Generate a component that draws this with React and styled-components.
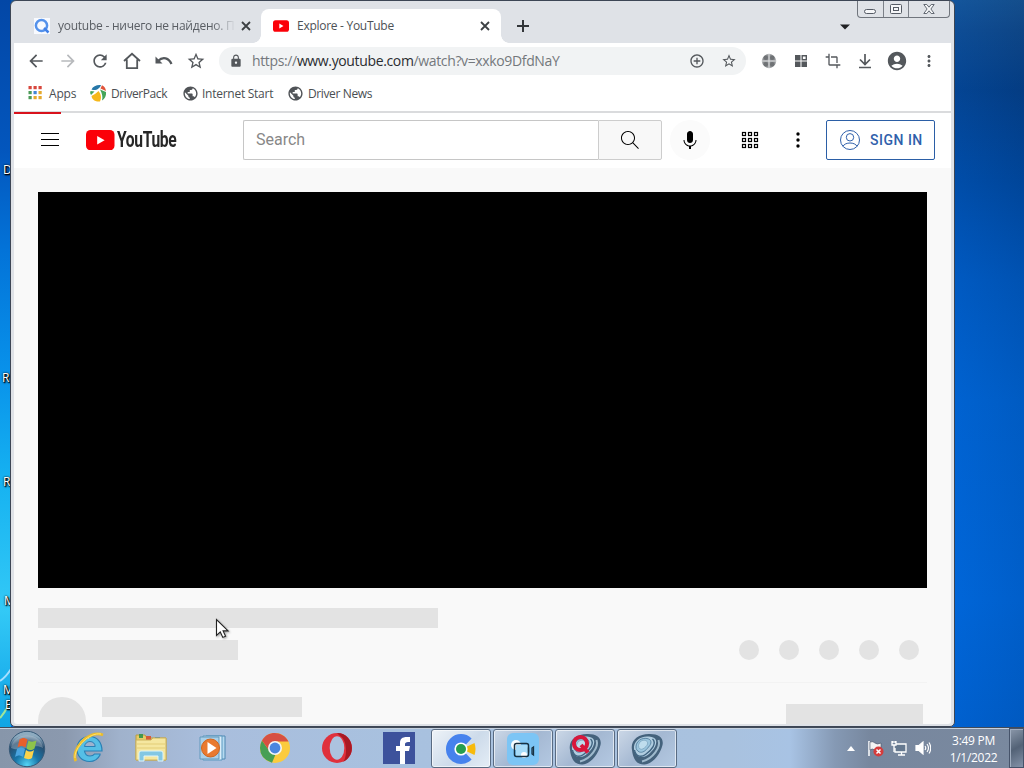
import React from "react";
import styled, { createGlobalStyle } from "styled-components";
import { MdArrowBack, MdArrowForward, MdRefresh, MdStarBorder, MdLock, MdCrop, MdAccountCircle, MdMoreVert, MdPublic, MdAddCircleOutline } from "react-icons/md";

const Global = createGlobalStyle`
  *{box-sizing:border-box}
  html,body{margin:0;overflow:hidden}
  svg{display:block;flex:none}
`;

const Desktop = styled.div`
  position: relative;
  width: 1024px;
  height: 768px;
  display: flex;
  flex-direction: column;
  overflow: hidden;
  font-family: "Open Sans", "Noto Sans", sans-serif;
  background:
    linear-gradient(180deg, #0347a6 0, #0356bd 150px, #0373d8 250px, #0891ea 370px, #16b2f1 480px, #33c9f6 610px, #20b4ee 670px, #10a5e4 727px) 0 0 / 11px 727px no-repeat,
    linear-gradient(90deg, rgba(0, 100, 220, 0.15) 954px, rgba(0, 40, 100, 0.12) 1024px),
    linear-gradient(180deg, #175391 0, #10498a 30px, #043f87 90px, #0049a0 180px, #0058bd 280px, #0062cf 400px, #0066d8 600px, #0060cd 727px);
`;
const DesktopLabel = styled.span`
  position: absolute;
  left: ${(p) => p.$x}px;
  top: ${(p) => p.$y}px;
  color: #fff;
  font-size: 12px;
  line-height: 16px;
  text-shadow: 1px 1px 2px #000, 0 0 2px #000, 1px 1px 1px #000;
`;
const Streaks = styled.svg`
  position: absolute;
  left: 0;
  top: 660px;
`;
const Window = styled.main`
  position: relative;
  width: 945px;
  height: 727px;
  margin-left: 10px;
  border: 1px solid #3d4655;
  border-radius: 6px 6px 5px 5px;
  background: #dfe2e7;
  padding: 0 3px 2px;
  display: flex;
  flex-direction: column;
  overflow: hidden;
`;
const TabStrip = styled.div`
  height: 42px;
  display: flex;
  align-items: flex-end;
  flex: none;
`;
const Tab = styled.div`
  position: relative;
  width: ${(p) => p.$width}px;
  height: 34px;
  padding: 0 ${(p) => p.$end}px 0 ${(p) => p.$pad}px;
  border-radius: 8px 8px 0 0;
  background: ${(p) => (p.$active ? "#fff" : "transparent")};
  display: flex;
  align-items: center;
  color: #3c4043;
  &::before, &::after {
    content: "";
    display: ${(p) => (p.$active ? "block" : "none")};
    position: absolute;
    bottom: 0;
    width: 8px;
    height: 8px;
  }
  &::before { left: -8px; background: radial-gradient(circle at 0 0, transparent 7.5px, #fff 8px); }
  &::after { right: -8px; background: radial-gradient(circle at 100% 0, transparent 7.5px, #fff 8px); }
`;
const TabTitle = styled.span`
  flex: 1;
  margin: -1px 0 0 8px;
  font-size: 12px;
  letter-spacing: ${(p) => p.$track}px;
  color: ${(p) => p.$color};
  white-space: nowrap;
  mask-image: ${(p) => (p.$fade ? "linear-gradient(90deg,#000 154px,transparent 178px)" : "none")};
`;
const NewTab = styled.div`
  width: 43px;
  height: 34px;
  display: flex;
  align-items: center;
  justify-content: center;
`;
const TabMenu = styled.svg`
  margin: 0 101px 13px auto;
`;
const Caption = styled.div`
  position: absolute;
  right: 4px;
  top: -1px;
  width: 93px;
  height: 18px;
  display: flex;
  border: 1px solid #70757d;
  border-top: 0;
  border-radius: 0 0 4px 4px;
  color: #555b65;
`;
const CaptionButton = styled.div`
  width: ${(p) => p.$w}px;
  display: flex;
  align-items: center;
  justify-content: center;
  & + & { border-left: 1px solid #7c8189; }
`;
const Toolbar = styled.div`
  height: 37px;
  flex: none;
  background: #fff;
  display: flex;
  align-items: center;
  padding: 0 0 1px 6px;
  color: #54585c;
`;
const ToolButton = styled.div`
  width: 32px;
  height: 32px;
  flex: none;
  display: flex;
  align-items: center;
  justify-content: center;
  color: ${(p) => (p.$dim ? "#b8babd" : "inherit")};
`;
const Omnibox = styled.div`
  width: 527px;
  height: 28px;
  margin: 0 7px;
  padding: 0 1px 0 10px;
  border-radius: 14px;
  background: #f1f3f4;
  display: flex;
  align-items: center;
`;
const Url = styled.span`
  flex: 1;
  margin: -1px 0 0 9px;
  font-size: 14px;
  letter-spacing: -0.36px;
  color: #74787c;
  white-space: nowrap;
  b { font-weight: 400; color: #2b2d30; }
`;
const Bookmarks = styled.div`
  height: 31px;
  flex: none;
  background: #fff;
  display: flex;
  align-items: center;
  padding: 0 14px 5px;
`;
const Bookmark = styled.div`
  width: ${(p) => p.$w}px;
  display: flex;
  align-items: center;
  gap: ${(p) => p.$gap}px;
  font-size: 12px;
  letter-spacing: ${(p) => p.$track}px;
  color: #4a4e52;
  white-space: nowrap;
`;
const LoadingRail = styled.div`
  height: 3px;
  flex: none;
  padding-top: 1px;
  background: linear-gradient(#dadbdd 2px, #fff 2px);
`;
const Progress = styled.div`
  width: 47px;
  height: 2px;
  background: #d8121c;
`;
const Page = styled.div`
  flex: 1;
  min-height: 0;
  background: #f9f9f9;
  overflow: hidden;
  border-radius: 0 0 3px 3px;
`;
const Masthead = styled.header`
  height: 54px;
  padding: 0 16px 2px 24px;
  background: #fff;
  display: flex;
  align-items: center;
`;
const Logo = styled.div`
  width: 157px;
  margin-left: 24px;
  display: flex;
  align-items: center;
`;
const Wordmark = styled.span`
  margin-left: 2.5px;
  font: 700 22px/24px Roboto, sans-serif;
  letter-spacing: -0.5px;
  color: #272727;
  transform: scaleX(0.71);
  transform-origin: 0 50%;
`;
const SearchField = styled.div`
  width: 355px;
  height: 40px;
  padding: 0 0 2px 12px;
  border: 1px solid #c6c6c6;
  border-right: 0;
  border-radius: 2px 0 0 2px;
  display: flex;
  align-items: center;
  color: #888;
  font: 16px Roboto, sans-serif;
`;
const SearchButton = styled.div`
  width: 64px;
  height: 40px;
  border: 1px solid #cdcdcd;
  border-radius: 0 2px 2px 0;
  background: #f8f8f8;
  display: flex;
  align-items: center;
  justify-content: center;
`;
const MicButton = styled.div`
  width: 40px;
  height: 40px;
  margin: 0 28px 0 8px;
  border-radius: 50%;
  background: #fbfbfb;
  display: flex;
  align-items: center;
  justify-content: center;
`;
const MenuDots = styled.svg`
  margin: 0 16px 0 24px;
`;
const SignIn = styled.div`
  width: 109px;
  height: 40px;
  padding-left: 11px;
  border: 1px solid #2b5ea6;
  border-radius: 2px;
  display: flex;
  align-items: center;
  gap: 8px;
  color: #2f60ab;
  font: 500 14px Roboto, sans-serif;
  letter-spacing: 0.5px;
  white-space: nowrap;
`;
const Watch = styled.div`
  width: 889px;
  margin: 24px 0 0 24px;
`;
const Player = styled.div`
  height: 396px;
  background: #000;
`;
const Block = styled.div`
  width: ${(p) => p.$w}px;
  height: 20px;
  background: #e3e3e3;
`;
const TitleSkeleton = styled.div`
  height: 95px;
  padding-top: 20px;
  border-bottom: 1px solid #f3f3f3;
  display: flex;
  flex-direction: column;
  gap: 12px;
`;
const MetaSkeleton = styled.div`
  display: flex;
  justify-content: space-between;
  padding-right: 8px;
`;
const Dots = styled.div`
  display: flex;
  gap: 20px;
`;
const Dot = styled.div`
  width: 20px;
  height: 20px;
  border-radius: 50%;
  background: #e3e3e3;
`;
const OwnerSkeleton = styled.div`
  display: flex;
  padding: 14px 4px 0 0;
`;
const Avatar = styled.div`
  width: 48px;
  height: 48px;
  margin-right: 16px;
  border-radius: 50%;
  background: #e3e3e3;
`;
const Subscribe = styled.div`
  width: 137px;
  height: 36px;
  margin: 7px 0 0 auto;
  background: #e3e3e3;
`;
const Cursor = styled.svg`
  position: absolute;
  left: 215px;
  top: 618px;
  filter: drop-shadow(1px 1px 1px rgba(0, 0, 0, 0.35));
`;
const Taskbar = styled.footer`
  height: 41px;
  flex: none;
  display: flex;
  border-top: 1px solid #414b5a;
  box-shadow: inset 0 1px #c5d1df;
  background: linear-gradient(90deg, #8796aa 0, #8b99ae 65px, #a0b2cc 120px, #a9bedd 210px, #a8c1df 400px, #a9c2df 730px, #a8c3e4 790px, #8599b4 835px, #77879e 870px, #7a899f 1024px);
`;
const StartCell = styled.div`
  width: 58px;
  padding: 2px 0 0 8px;
`;
const Launcher = styled.div`
  width: 62px;
  height: 40px;
  display: flex;
  align-items: center;
  justify-content: center;
`;
const TaskButton = styled.div`
  width: 60px;
  height: 39px;
  margin: 1px 2px 0 0;
  border: 1px solid #596b82;
  border-radius: 3px;
  box-shadow: inset 0 0 0 1px rgba(255, 255, 255, 0.6);
  background: ${(p) => (p.$active ? "linear-gradient(135deg,#eef3f8,#cddbea 55%,#e4edf6)" : "linear-gradient(135deg,#ccd8e7,#a4b8d2 50%,#b4c9e2)")};
  display: flex;
  align-items: center;
  justify-content: center;
`;
const Running = styled.div`
  display: flex;
  margin-left: 1px;
`;
const Tray = styled.div`
  margin-left: auto;
  display: flex;
  align-items: center;
`;
const TrayIcon = styled.div`
  width: 24px;
  display: flex;
  justify-content: center;
`;
const Clock = styled.div`
  width: 74px;
  padding: 2px 0 0 3px;
  color: #fff;
  text-align: center;
  font-size: 12px;
  line-height: 17px;
  letter-spacing: -0.3px;
`;
const ShowDesktop = styled.div`
  width: 15px;
  height: 40px;
  border: 1px solid #46536a;
  box-shadow: inset 1px 1px #a0adbf;
  background: linear-gradient(150deg, #8b98aa, #536276 50%, #8492a8);
`;

const CloseIcon = () => (
  <svg width="14" height="14"><path d="M3 3l8 8m0-8l-8 8" stroke="#3c4043" strokeWidth="1.800" /></svg>
);

const YtBadge = ({ w, h }) => (
  <svg width={w} height={h} viewBox="0 0 28 20">
    <rect width="28" height="20" rx="4.5" fill="#fb0008" />
    <path d="M11 5.8v8.4l7.3-4.2z" fill="#fff" />
  </svg>
);

const AppsGrid = () => {
  const colors = ["#d8473d", "#d8473d", "#d8473d", "#4b9a57", "#4285d4", "#e5a92c", "#4b9a57", "#e5a92c", "#e5a92c"];
  return (
    <svg width="14" height="14">
      {colors.map((c, i) => (
        <rect key={i} x={0.5 + (i % 3) * 5} y={Math.floor(i / 3) * 5} width="3.2" height="3.2" fill={c} />
      ))}
    </svg>
  );
};

const DriverPackIcon = () => (
  <svg width="18" height="18" viewBox="0 0 18 18">
    <path d="M2.500 5.500C4 2 8 .5 12 1c-1 3-4 5.500-8 5z" fill="#2677a8" />
    <path d="M13 1.300c2.500 1 3.500 3 4 5.700L11.500 4.500z" fill="#e0543a" />
    <path d="M11 5.500l6 2.500c.4 4-1 6.500-4 8.500 1-4 0-7-2-11z" fill="#45a55a" />
    <path d="M1.500 7l4 .5L2 11q-1.500-2-.5-4z" fill="#45a55a" />
    <path d="M2.500 12c2-1 5-3 7-5 3 4 3 7 1.500 10.500-4 .5-8-1.500-8.500-5.500z" fill="#f6b81a" />
  </svg>
);

const Shell = ({ q }) => (
  <svg width="34" height="34" viewBox="0 0 34 34">
    <path d="M2 18C0 8 9 1.500 20 2c9 0 14 4 12.500 11-2 9-10 19-18 19.500C6 33 3 26 2 18z" fill="#44627c" />
    <path d="M28.500 8C31 15 23 27 12 29.500" fill="none" stroke="#9fbacd" strokeWidth="2" />
    <path d="M4 17C3 9 11 3.500 19 4.500c8 .5 9 5.500 5 12-4 5-8 9-12 8.500-5 0-7-3-8-8z" fill="#b0cde0" />
    <path d="M4.500 18c1 6 6 8 11 4.500C22 18 27 11 22.500 7" fill="none" stroke="#3f6380" strokeWidth="1.400" />
    <path d="M6 15c0-6 6-9.500 11-8.500s5 5 1.500 8.500c-3 4-6 6-9 5-2.500-1-3.500-3-3.500-5z" fill="#9cc6de" stroke="#5c86a4" />
    <path d="M8.500 13.500c.5-4 4-6 7-5s2.500 4 .5 6-4 3.500-6 2.500q-1.500-1-1.500-3.500z" fill="#bfdded" stroke="#7ca5bf" strokeWidth=".8" />
    {q && (
      <g fill="none" stroke="#d8173c" strokeWidth="4">
        <circle cx="12.500" cy="11.500" r="6.600" />
        <path d="M13 13l7 7.500" />
      </g>
    )}
  </svg>
);

const StartOrb = () => (
  <svg width="38" height="38" viewBox="0 0 38 38">
    <defs>
      <radialGradient id="orb" cx=".5" cy=".95" r=".85">
        <stop offset="0" stopColor="#55d5f5" />
        <stop offset=".4" stopColor="#1876a9" />
        <stop offset=".8" stopColor="#294d6e" />
        <stop offset="1" stopColor="#8dabc0" />
      </radialGradient>
    </defs>
    <circle cx="19" cy="19" r="17.700" fill="url(#orb)" stroke="#375a78" />
    <path d="M3 18C5 1 33 1 35 18c-9-6-22 5-32 0z" fill="#fff" opacity=".25" />
    <path d="M11.500 9.500c3-2 5-2 8 0l-2 8c-3-2-5-2-8 0z" fill="#e8602c" />
    <path d="M20.500 10.500c3 2 5 1 8 0l-2 8c-3 2-5 2-8 0z" fill="#8dc34b" />
    <path d="M9 19c3-2 5-2 8 0l-2 8c-3-2-5-2-8 0z" fill="#4aa4df" />
    <path d="M18 20c3 2 5 2 8 0l-2 8c-3 2-5 1-8 0z" fill="#fbd34b" />
  </svg>
);

const IeIcon = () => (
  <svg width="34" height="34" viewBox="0 0 34 34">
    <path d="M28 24C26 28 22 30.500 17.500 30.500 10 30.500 5 25 5 18S10 5.500 17.500 5.500C25 5.500 30 11 30 20H12.500c.5 3 2.500 5 5.500 5 2 0 3.500-.5 4.500-2H28z" fill="#55bfe6" stroke="#2a80b5" strokeWidth="1.200" />
    <path d="M12.500 15.500c.5-3 2.500-5 5.500-5s5 2 5.200 5z" fill="#9eb2ce" stroke="#2a80b5" />
    <path d="M8 13c2-4 5-6 9-6" fill="none" stroke="#b5e7f7" strokeWidth="1.500" />
    <path d="M4 30C-2 20 16-2 31 4" fill="none" stroke="#edbd29" strokeWidth="2.800" />
    <path d="M3 27C2 17 17 1 29 3" fill="none" stroke="#ffe270" strokeWidth="1" />
  </svg>
);

const FolderIcon = () => (
  <svg width="34" height="32" viewBox="0 0 34 32">
    <path d="M2 3h9l2 3h19v22H2z" fill="#e6cc67" stroke="#b99c47" />
    <path d="M5 2h4v4H5z" fill="#42974e" />
    <path d="M12 4h5v4h-5z" fill="#d55b3a" />
    <path d="M21 5h5v4h-5z" fill="#4886b5" />
    <path d="M2 8h15l2-2h13v22H2z" fill="#f5e7a0" stroke="#cdb35d" />
    <path d="M3 12h28M3 16h28" stroke="#e3cd77" />
    <path d="M5 29V21q0-2 2-2h20q2 0 2 2v8h-5v-5H10v5z" fill="#83c7e3" stroke="#dff5fa" />
  </svg>
);

const PlayerIcon = () => (
  <svg width="30" height="30" viewBox="0 0 30 30">
    <path d="M8 3h19v23H8z" fill="#b6daf0" stroke="#4e88b2" />
    <path d="M5 3h19v24H5z" fill="#dbeef9" stroke="#5b98c0" />
    <path d="M2 4h19v22H2z" fill="#aad0e9" stroke="#6299bd" />
    <circle cx="12.500" cy="15" r="9" fill="#e97a30" stroke="#d1651c" />
    <path d="M9.500 9v12l9-6z" fill="#fff" />
  </svg>
);

const ChromeIcon = () => (
  <svg width="30" height="30" viewBox="0 0 30 30">
    <circle cx="15" cy="15" r="15" fill="#fbcb3e" />
    <path d="M2 7.500L9.500 18l6 3.500L12 29.700Q0 26 0 15 0 11 2 7.500z" fill="#479f54" />
    <path d="M15 8.500h13.500C23-2 8-3 2 7.500L9.500 18z" fill="#d75042" />
    <circle cx="15" cy="15" r="7" fill="#f4f6f8" />
    <circle cx="15" cy="15" r="5.400" fill="#4b86df" />
  </svg>
);

const OperaIcon = () => (
  <svg width="30" height="30" viewBox="0 0 30 30">
    <circle cx="15" cy="15" r="15" fill="#e0303c" />
    <path d="M15 0c17 0 20 23 6 29 4-4 5-22-3-26z" fill="#a91923" />
    <ellipse cx="15" cy="15" rx="7.300" ry="11.800" fill="#acc3df" />
  </svg>
);

const FacebookIcon = () => (
  <svg width="32" height="32" viewBox="0 0 32 32">
    <path d="M0 0h32v32H0z" fill="#3d529c" />
    <path d="M17 32V19h-4v-5h4v-3c0-4 2-6 7-6h3v5h-2c-2 0-3 1-3 2v2h5l-1 5h-4v13z" fill="#fff" />
  </svg>
);

const BrowserIcon = () => (
  <svg width="30" height="30" viewBox="0 0 30 30">
    <path d="M25.600 4.400A15 15 0 1 0 25.600 25.600L19 18.500V11.500z" fill="#4682ed" />
    <path d="M20 13l8.500-4q2 6 0 12L20 17z" fill="#f7ba0b" />
    <circle cx="15" cy="15" r="6.600" fill="#fff" />
    <circle cx="15" cy="15" r="5" fill="#269e50" />
  </svg>
);

const CameraIcon = () => (
  <svg width="32" height="32" viewBox="0 0 32 32">
    <rect width="32" height="32" rx="6" fill="#7cc5f5" />
    <circle cx="9" cy="12" r="5" fill="#f6fcff" />
    <path d="M9 23V12h12v11z" fill="#a7dcf9" />
    <circle cx="17" cy="22" r="3" fill="#fff" />
    <rect x="7.500" y="10.500" width="14" height="13" rx="2" fill="none" stroke="#183141" strokeWidth="1.500" />
    <path d="M21.500 14.500v5M25 15l1.500-1v8L25 21z" fill="none" stroke="#183141" strokeWidth="1.300" />
  </svg>
);

export default function App() {
  return (
    <Desktop>
      <Global />
      <Streaks width="11" height="67">
        <path d="M0 21Q6 17 11 9" stroke="#a6dfff" strokeWidth="2" fill="none" />
        <path d="M0 58Q5 52 8 46" stroke="#9fe59b" strokeWidth="2" fill="none" />
      </Streaks>
      <DesktopLabel $x={3} $y={162}>D</DesktopLabel>
      <DesktopLabel $x={2} $y={370}>R</DesktopLabel>
      <DesktopLabel $x={3} $y={474}>R</DesktopLabel>
      <DesktopLabel $x={4} $y={593}>M</DesktopLabel>
      <DesktopLabel $x={3} $y={682}>M</DesktopLabel>
      <DesktopLabel $x={5} $y={697}>E</DesktopLabel>
      <Window>
        <TabStrip>
          <Tab $width={247} $pad={20} $end={8}>
            <svg width="16" height="16">
              <rect width="16" height="16" fill="#f8faff" />
              <circle cx="7.500" cy="7.500" r="5.600" fill="none" stroke="#5592eb" strokeWidth="2.500" />
              <path d="M10 10l4.500 4.500" stroke="#4181e8" strokeWidth="2.500" />
            </svg>
            <TabTitle $fade $track={-0.25} $color="#5a5e64">youtube - ничего не найдено. П</TabTitle>
            <CloseIcon />
          </Tab>
          <Tab $width={240} $pad={12} $end={9} $active>
            <YtBadge w={16} h={12} />
            <TabTitle $track={-0.28} $color="#4d5155">Explore - YouTube</TabTitle>
            <CloseIcon />
          </Tab>
          <NewTab><svg width="12" height="12"><path d="M6 0v12M0 6h12" stroke="#33363a" strokeWidth="2" /></svg></NewTab>
          <TabMenu width="10" height="6"><path d="M0 .5h10L5 5.500z" fill="#202124" /></TabMenu>
        </TabStrip>
        <Caption>
          <CaptionButton $w={25}>
            <svg width="13" height="18"><rect x=".5" y="9.500" width="11" height="4" rx="2" fill="#f5f6f8" stroke="currentColor" /></svg>
          </CaptionButton>
          <CaptionButton $w={25}>
            <svg width="12" height="18"><rect x=".5" y="4.500" width="11" height="9" rx="1" fill="#f5f6f8" stroke="currentColor" /><rect x="3.500" y="7.500" width="5" height="3" fill="none" stroke="currentColor" /></svg>
          </CaptionButton>
          <CaptionButton $w={41}>
            <svg width="12" height="18"><path d="M.8 4.500h3l2.200 2.700 2.200-2.700h3L7.900 9l3.300 4.500h-3L6 10.800l-2.200 2.700h-3L4.100 9z" fill="#f5f6f8" stroke="currentColor" strokeWidth=".9" /></svg>
          </CaptionButton>
        </Caption>
        <Toolbar>
          <ToolButton><MdArrowBack size={20} /></ToolButton>
          <ToolButton $dim><MdArrowForward size={20} /></ToolButton>
          <ToolButton><MdRefresh size={20} /></ToolButton>
          <ToolButton><svg width="18" height="18" fill="none" stroke="currentColor" strokeWidth="1.800"><path d="M1 9L9 1.800 17 9M3.800 7.500v8.600h10.400V7.500" /></svg></ToolButton>
          <ToolButton><svg width="18" height="14"><path d="M3 7C8 2 14 4 16.500 10" fill="none" stroke="currentColor" strokeWidth="2.200" /><path d="M.5 2.500v7h7z" fill="currentColor" /></svg></ToolButton>
          <ToolButton><MdStarBorder size={20} /></ToolButton>
          <Omnibox>
            <MdLock size={14} />
            <Url>https://<b>www.youtube.com</b>/watch?v=xxko9DfdNaY</Url>
            <ToolButton><MdAddCircleOutline size={16} /></ToolButton>
            <ToolButton><MdStarBorder size={16} /></ToolButton>
          </Omnibox>
          <ToolButton>
            <svg width="16" height="16">
              <circle cx="8" cy="8" r="7" fill="#8b8e91" />
              <g fill="#6f7275"><circle cx="4.800" cy="4.800" r="2.200" /><circle cx="11.200" cy="4.800" r="2.200" /><circle cx="4.800" cy="11.200" r="2.200" /><circle cx="11.200" cy="11.200" r="2.200" /></g>
              <path d="M8 0v16M0 8h16" stroke="#e8e9ea" strokeWidth="1" />
            </svg>
          </ToolButton>
          <ToolButton>
            <svg width="14" height="14" fill="currentColor"><path d="M1 1h5.500v5.500H1zM1 7.500h5.500V13H1zM7.500 7.500H13V13H7.500z" /><path d="M8.200 1.700h4.100v4.100H8.200z" fill="none" stroke="currentColor" strokeWidth="1.400" /></svg>
          </ToolButton>
          <ToolButton><MdCrop size={16} /></ToolButton>
          <ToolButton>
            <svg width="14" height="16" fill="none" stroke="currentColor" strokeWidth="1.700"><path d="M7 1v10M2 6.500l5 5 5-5M1 14.500h12" /></svg>
          </ToolButton>
          <ToolButton><MdAccountCircle size={22} /></ToolButton>
          <ToolButton><MdMoreVert size={18} /></ToolButton>
        </Toolbar>
        <Bookmarks>
          <Bookmark $w={61} $gap={7} $track={-0.2}><AppsGrid />Apps</Bookmark>
          <Bookmark $w={93} $gap={4} $track={-0.42}><DriverPackIcon />DriverPack</Bookmark>
          <Bookmark $w={105} $gap={3} $track={-0.26}><MdPublic size={17} color="#505357" />Internet Start</Bookmark>
          <Bookmark $w={100} $gap={4} $track={-0.38}><MdPublic size={17} color="#505357" />Driver News</Bookmark>
        </Bookmarks>
        <LoadingRail><Progress /></LoadingRail>
        <Page>
          <Masthead>
            <svg width="24" height="24" viewBox="0 0 24 24" shapeRendering="crispEdges"><path d="M21 6H3V5h18v1zm0 6H3v-1h18v1zm0 6H3v-1h18v1z" /></svg>
            <Logo>
              <YtBadge w={28.5} h={20.4} />
              <Wordmark>YouTube</Wordmark>
            </Logo>
            <SearchField>Search</SearchField>
            <SearchButton>
              <svg width="24" height="24" viewBox="0 0 24 24"><path d="M20.870 20.170l-5.590-5.590C16.350 13.350 17 11.750 17 10c0-3.870-3.130-7-7-7s-7 3.130-7 7 3.130 7 7 7c1.750 0 3.350-.65 4.580-1.710l5.590 5.590zM10 16c-3.310 0-6-2.690-6-6s2.690-6 6-6 6 2.690 6 6-2.690 6-6 6z" /></svg>
            </SearchButton>
            <MicButton>
              <svg width="24" height="24" viewBox="0 0 24 24"><path d="M12 3c-1.660 0-3 1.370-3 3.070v5.860C9 13.630 10.340 15 12 15s3-1.370 3-3.070V6.070C15 4.370 13.660 3 12 3zm6.500 9h-1c0 3.030-2.470 5.500-5.500 5.500S6.500 15.030 6.500 12h-1c0 3.240 2.390 5.930 5.500 6.410V21h2v-2.590c3.110-.48 5.500-3.170 5.500-6.410z" /></svg>
            </MicButton>
            <svg width="24" height="24" fill="none" stroke="#000" strokeWidth="1.200">
              {[0, 1, 2, 3, 4, 5, 6, 7, 8].map((i) => <rect key={i} x={4.500 + (i % 3) * 6} y={4.500 + Math.floor(i / 3) * 6} width="3" height="3" />)}
            </svg>
            <MenuDots width="24" height="24"><circle cx="12" cy="6" r="1.700" /><circle cx="12" cy="12" r="1.700" /><circle cx="12" cy="18" r="1.700" /></MenuDots>
            <SignIn>
              <svg width="24" height="24" fill="none" stroke="currentColor"><circle cx="12" cy="12" r="9.500" /><circle cx="12" cy="9.300" r="3.700" /><path d="M5 18.300c2-4.400 12-4.400 14 0" /></svg>
              SIGN IN
            </SignIn>
          </Masthead>
          <Watch>
            <Player />
            <TitleSkeleton>
              <Block $w={400} />
              <MetaSkeleton>
                <Block $w={200} />
                <Dots><Dot /><Dot /><Dot /><Dot /><Dot /></Dots>
              </MetaSkeleton>
            </TitleSkeleton>
            <OwnerSkeleton><Avatar /><Block $w={200} /><Subscribe /></OwnerSkeleton>
          </Watch>
        </Page>
      </Window>
      <Taskbar>
        <StartCell><StartOrb /></StartCell>
        <Launcher><IeIcon /></Launcher>
        <Launcher><FolderIcon /></Launcher>
        <Launcher><PlayerIcon /></Launcher>
        <Launcher><ChromeIcon /></Launcher>
        <Launcher><OperaIcon /></Launcher>
        <Launcher><FacebookIcon /></Launcher>
        <Running>
          <TaskButton $active><BrowserIcon /></TaskButton>
          <TaskButton><CameraIcon /></TaskButton>
          <TaskButton><Shell q /></TaskButton>
          <TaskButton><Shell /></TaskButton>
        </Running>
        <Tray>
          <TrayIcon><svg width="8" height="5"><path d="M0 5L4 0l4 5z" fill="#fff" /></svg></TrayIcon>
          <TrayIcon>
            <svg width="17" height="17"><path d="M2 1v15" stroke="#fff" strokeWidth="1.500" /><path d="M3 2q3-1 5 1t6 0v8q-3 1-6-1t-5 0z" fill="#f4f4f4" stroke="#465365" strokeWidth=".6" /><circle cx="11.500" cy="11.500" r="5" fill="#d53c3c" /><path d="M9.500 9.500l4 4m0-4l-4 4" stroke="#fff" strokeWidth="1.500" /></svg>
          </TrayIcon>
          <TrayIcon>
            <svg width="16" height="16" fill="none" stroke="#fff" strokeWidth="1.300"><path d="M5 4h10v8H4V8" fill="#65788f" /><path d="M7 15h7M10.500 12v3M1 1v4h4V1M3 5v7M2 1v2M4 1v2" /></svg>
          </TrayIcon>
          <TrayIcon>
            <svg width="16" height="14" fill="none" stroke="#fff" strokeWidth="1.200"><path d="M1 4.500h3L8 1v12L4 9.500H1z" fill="#fff" /><path d="M10 5q1.500 2 0 4M12 3q3 4 0 8M14 1.500q3.500 5.500 0 11" /></svg>
          </TrayIcon>
          <Clock>3:49 PM<br />1/1/2022</Clock>
          <ShowDesktop />
        </Tray>
      </Taskbar>
      <Cursor width="16" height="22" viewBox="0 0 16 22">
        <path d="M1.500 1.500v16l3.800-3.600 2.500 5.500 2.800-1.200-2.500-5.300h5z" fill="#fff" stroke="#222" strokeWidth="1.100" />
      </Cursor>
    </Desktop>
  );
}
